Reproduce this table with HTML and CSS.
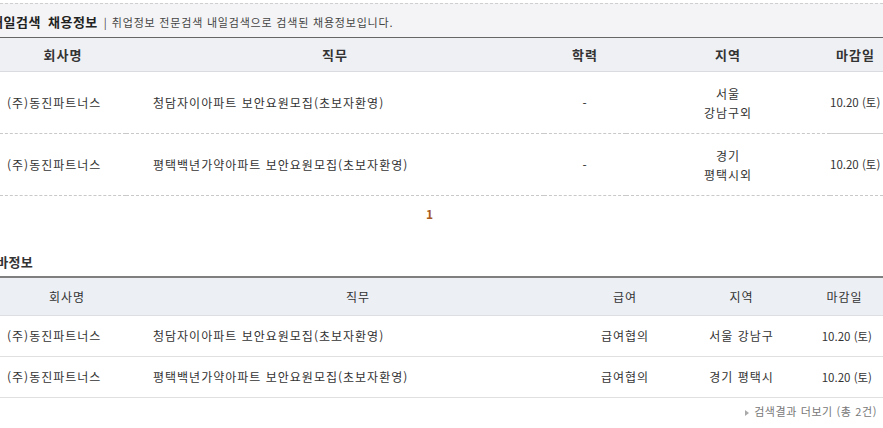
FILE: index.html
```html
<!DOCTYPE html>
<html lang="ko">
<head>
<meta charset="utf-8">
<link rel="stylesheet" href="styles.css">
</head>
<body>
<div class="wrap">
  <div class="title-box">
    <strong class="title">내일검색 채용정보</strong>
    <span class="sep">|</span>
    <span class="desc">취업정보 전문검색 내일검색으로 검색된 채용정보입니다.</span>
  </div>
  <table class="list list-a">
    <colgroup>
      <col class="a1"><col class="a2"><col class="a3"><col class="a4"><col class="a5">
    </colgroup>
    <thead>
      <tr><th>회사명</th><th>직무</th><th>학력</th><th>지역</th><th class="date-h">마감일</th></tr>
    </thead>
    <tbody>
      <tr>
        <td class="company">(주)동진파트너스</td>
        <td class="job">청담자이아파트 보안요원모집(초보자환영)</td>
        <td class="c">-</td>
        <td class="c">서울<br>강남구외</td>
        <td class="date solid">10.20 (토)</td>
      </tr>
      <tr>
        <td class="company">(주)동진파트너스</td>
        <td class="job">평택백년가약아파트 보안요원모집(초보자환영)</td>
        <td class="c">-</td>
        <td class="c">경기<br>평택시외</td>
        <td class="date">10.20 (토)</td>
      </tr>
    </tbody>
  </table>
  <div class="paging"><strong class="page-on">1</strong></div>

  <h3 class="title2">알바정보</h3>
  <table class="list list-b">
    <colgroup>
      <col class="b1"><col class="b2"><col class="b3"><col class="b4"><col class="b5">
    </colgroup>
    <thead>
      <tr><th>회사명</th><th>직무</th><th>급여</th><th>지역</th><th class="date-h">마감일</th></tr>
    </thead>
    <tbody>
      <tr>
        <td class="company">(주)동진파트너스</td>
        <td class="job">청담자이아파트 보안요원모집(초보자환영)</td>
        <td class="c">급여협의</td>
        <td class="c">서울 강남구</td>
        <td class="date">10.20 (토)</td>
      </tr>
      <tr>
        <td class="company">(주)동진파트너스</td>
        <td class="job">평택백년가약아파트 보안요원모집(초보자환영)</td>
        <td class="c">급여협의</td>
        <td class="c">경기 평택시</td>
        <td class="date">10.20 (토)</td>
      </tr>
    </tbody>
  </table>
  <div class="more"><span class="arrow"></span>검색결과 더보기 (총 2건)</div>
</div>
</body>
</html>
```

FILE: styles.css
```css
* { box-sizing: border-box; }
html, body { margin: 0; padding: 0; background: #fff; }
body {
  font-family: "Noto Sans CJK KR", "Noto Sans", sans-serif;
  font-size: 12px;
  color: #333;
  width: 883px;
  overflow: hidden;
}
.wrap { padding-top: 3px; }

.title-box {
  height: 34px;
  border-top: 1px dashed #cfcfcf;
  background: #f4f4f6;
  display: flex;
  align-items: center;
  padding-top: 2px;
  white-space: nowrap;
}
.title {
  margin-left: -9px;
  font-size: 13px;
  font-weight: 700;
  color: #222;
  letter-spacing: 0.5px;
  word-spacing: 3px;
}
.sep { margin: 0 5px 0 6px; font-size: 11px; color: #444; }
.desc { font-size: 11px; color: #444; letter-spacing: 0.8px; }

.list {
  width: 883px;
  border-collapse: collapse;
  table-layout: fixed;
}
.list th, .list td { padding: 0; vertical-align: middle; }
.list td { letter-spacing: 1px; }

.list-a { border-top: 1px solid #666; }
.list-a .a1 { width: 126px; }
.list-a .a2 { width: 418px; }
.list-a .a3 { width: 82px; }
.list-a .a4 { width: 204px; }
.list-a .a5 { width: 53px; }
.list-a th {
  height: 34px;
  background: #eef0f4;
  border-bottom: 1px solid #d9dbe0;
  font-size: 13px;
  font-weight: 700;
  color: #333;
  text-align: center;
  letter-spacing: 1px;
}
.list-a th.date-h { text-align: right; padding-right: 8px; }
.list-a td {
  height: 62px;
  border-bottom: 1px dashed #c9c9c9;
  line-height: 19px;
}
.list-a td.solid { border-bottom: 1px solid #d0d0d0; }
.list-a .job { padding-left: 27px; }

.company { padding-left: 7px !important; white-space: nowrap; }
.list td.c { text-align: center; }
.list td.date { text-align: right; padding-right: 4px; white-space: nowrap; font-size: 11.5px; letter-spacing: 0; }

.paging {
  height: 42px;
  padding-top: 11px;
  text-align: center;
  padding-right: 24px;
  line-height: 14px;
}
.page-on { color: #a85a22; font-weight: 700; font-size: 12px; }

.title2 {
  margin: 16px 0 0 -16px;
  font-size: 13px;
  font-weight: 700;
  line-height: 16px;
  color: #333;
  height: 22px;
  white-space: nowrap;
  letter-spacing: 0.3px;
}

.list-b { border-top: 2px solid #7f7f7f; }
.list-b .b1 { width: 134px; }
.list-b .b2 { width: 448px; }
.list-b .b3 { width: 86px; }
.list-b .b4 { width: 147px; }
.list-b .b5 { width: 68px; }
.list-b th {
  height: 38px;
  background: #eceff4;
  border-bottom: 1px solid #dcdee2;
  font-weight: 400;
  font-size: 12px;
  color: #333;
  text-align: center;
  letter-spacing: 1px;
}
.list-b th.date-h { text-align: right; padding-right: 20px; border-right: 1px solid #d5d7db; }
.list-b td {
  height: 41px;
  border-bottom: 1px solid #e0e0e0;
}
.list-b .job { padding-left: 19px; }
.list-b td.date { padding-right: 11px; }

.more {
  text-align: right;
  padding: 6px 6px 0 0;
  font-size: 11px;
  line-height: 14px;
  color: #777;
  white-space: nowrap;
  letter-spacing: 0.6px;
}
.arrow {
  display: inline-block;
  width: 0;
  height: 0;
  border-left: 4px solid #aaa;
  border-top: 3.5px solid transparent;
  border-bottom: 3.5px solid transparent;
  margin-right: 5px;
  vertical-align: 0;
}
```
